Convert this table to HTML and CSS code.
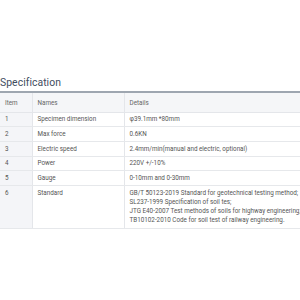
FILE: index.html
```html
<!DOCTYPE html>
<html lang="en">
<head>
  <meta charset="utf-8" />
  <meta name="viewport" content="width=device-width,initial-scale=1" />
  <title>Specification</title>
  <link rel="stylesheet" href="styles.css">
</head>
<body>
  <div class="wrap">
    <h2 class="title">Specification</h2>
    <table class="spec">
      <thead>
        <tr><th class="c-item">Item</th><th class="c-name">Names</th><th>Details</th></tr>
      </thead>
      <tbody>
        <tr><td class="c-item">1</td><td>Specimen dimension</td><td>φ39.1mm *80mm</td></tr>
        <tr><td class="c-item">2</td><td>Max force</td><td>0.6KN</td></tr>
        <tr><td class="c-item">3</td><td>Electric speed</td><td>2.4mm/min(manual and electric, optional)</td></tr>
        <tr><td class="c-item">4</td><td>Power</td><td>220V +/-10%</td></tr>
        <tr><td class="c-item">5</td><td>Gauge</td><td>0-10mm and 0-30mm</td></tr>
        <tr class="tall">
          <td class="c-item">6</td><td>Standard</td>
          <td>GB/T 50123-2019 Standard for geotechnical testing method;<br>
            SL237-1999 Specification of soil tes;<br>
            JTG E40-2007 Test methods of soils for highway engineering;<br>
            TB10102-2010 Code for soil test of railway engineering.</td>
        </tr>
      </tbody>
    </table>
  </div>
</body>
</html>
```

FILE: styles.css
```css
*{box-sizing:border-box;margin:0;padding:0}
html,body{background:#fff;overflow:hidden}
body{font-family:Roboto,'Liberation Sans',sans-serif;color:#555}
.wrap{padding-top:76px;width:320px}
.title{font-size:10.4px;font-weight:400;color:#3f4d5e;line-height:13px;margin-bottom:2px;letter-spacing:.05px}
.spec{width:318px;border-collapse:collapse;border-top:2px solid #9ea6b0;box-shadow:0 2px 2px rgba(0,0,0,.08);font-size:6.3px}
.spec th{background:#f5f6f8;font-weight:400;color:#666;text-align:left;height:20px;padding:2px 5px 0;border-top:1px solid #e2e5e9;border-bottom:1px solid #e4e6ea;border-left:1px solid #e4e6ea}
.spec td{padding:2.8px 5px;line-height:8.1px;border-bottom:1px solid #e6e8eb;border-left:1px solid #e4e6ea;vertical-align:top;color:#555;white-space:nowrap}
.spec .c-item{width:32px;border-left:none;background:#f4f5f8}
.spec .c-name{width:92px}
.spec tr.tall td{padding-top:3px;padding-bottom:3px;line-height:9px}
```
